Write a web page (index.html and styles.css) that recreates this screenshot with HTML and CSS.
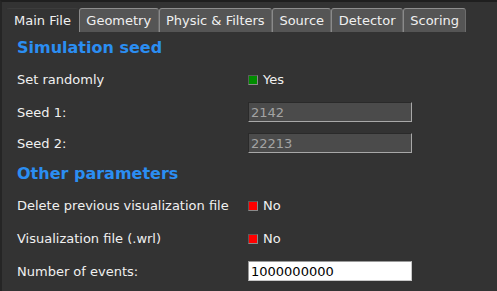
FILE: index.html
```html
<!DOCTYPE html>
<html lang="en">
<head>
    <meta charset="UTF-8">
    <title>Main File</title>
    <link rel="stylesheet" href="styles.css">
</head>
<body>
    <div class="window">
        <div class="tabs">
            <div class="tab active">Main File</div>
            <div class="tab">Geometry</div>
            <div class="tab">Physic &amp; Filters</div>
            <div class="tab">Source</div>
            <div class="tab">Detector</div>
            <div class="tab">Scoring</div>
        </div>

        <div class="pane">
            <div class="row heading">Simulation seed</div>
            <div class="row check-row">
                <span class="label">Set randomly</span>
                <span class="toggle"><span class="box on"></span>Yes</span>
            </div>
            <div class="row field-row">
                <span class="label">Seed 1:</span>
                <input class="field readonly" type="text" value="2142" readonly>
            </div>
            <div class="row field-row seed2">
                <span class="label">Seed 2:</span>
                <input class="field readonly" type="text" value="22213" readonly>
            </div>

            <div class="row heading">Other parameters</div>
            <div class="row check-row">
                <span class="label">Delete previous visualization file</span>
                <span class="toggle"><span class="box off"></span>No</span>
            </div>
            <div class="row check-row">
                <span class="label">Visualization file (.wrl)</span>
                <span class="toggle"><span class="box off"></span>No</span>
            </div>
            <div class="row field-row">
                <span class="label">Number of events:</span>
                <input class="field" type="text" value="1000000000">
            </div>
        </div>
    </div>
</body>
</html>
```

FILE: styles.css
```css
html, body {
    margin: 0;
    height: 100%;
    background-color: #333333;
}

body {
    font-family: 'DejaVu Sans', 'Liberation Sans', sans-serif;
    font-size: 13px;
    color: #f0f0f0;
}

.window {
    height: 100%;
    box-sizing: border-box;
    border-top: 2px solid #1f1f1f;
    border-left: 2px solid #252525;
    background-color: #333333;
}

.tabs {
    display: flex;
    padding: 6px 0 0 4px;
}

.tab {
    height: 23px;
    padding: 0 6.4px;
    display: flex;
    align-items: center;
    background-color: #555555;
    border: 1px solid #6c6c6c;
    border-top-color: #8e8e8e;
    border-left-color: #8a8a8a;
    border-bottom: none;
    border-radius: 3px 3px 0 0;
    color: #f0f0f0;
    white-space: nowrap;
}

.tab.active {
    padding: 0 7px;
    background-color: #333333;
    border-color: #333333;
    border-top-color: #3c3c3c;
}

.pane {
    padding-left: 15px;
    display: flex;
    flex-direction: column;
}

.row {
    display: grid;
    grid-template-columns: 231px auto;
    align-items: center;
}

.heading {
    height: 31px;
    display: flex;
    font-size: 16px;
    font-weight: bold;
    color: #2b8ef2;
}

.check-row {
    height: 33px;
}

.field-row {
    height: 32px;
}

.field-row.seed2 {
    height: 30px;
}

.toggle {
    display: flex;
    align-items: center;
}

.box {
    width: 8px;
    height: 8px;
    margin-right: 5px;
    border: 1px solid #8a8a8a;
    border-top-color: #5a5a5a;
    border-left-color: #5a5a5a;
}

.box.on {
    background-color: #008c00;
}

.box.off {
    background-color: #ff0000;
}

.field {
    width: 164px;
    height: 20px;
    box-sizing: border-box;
    margin: 0;
    padding: 0 2px;
    font-family: 'DejaVu Sans', 'Liberation Sans', sans-serif;
    font-size: 13px;
    color: #000000;
    background-color: #ffffff;
    border: 1px solid #c8c8c8;
    border-top-color: #9a9a9a;
    border-left-color: #9a9a9a;
    outline: none;
}

.field.readonly {
    color: #a3a3a3;
    background-color: #4b4b4b;
    border-color: #a8a8a8;
    border-top-color: #2a2a2a;
    border-left-color: #2a2a2a;
}
```
